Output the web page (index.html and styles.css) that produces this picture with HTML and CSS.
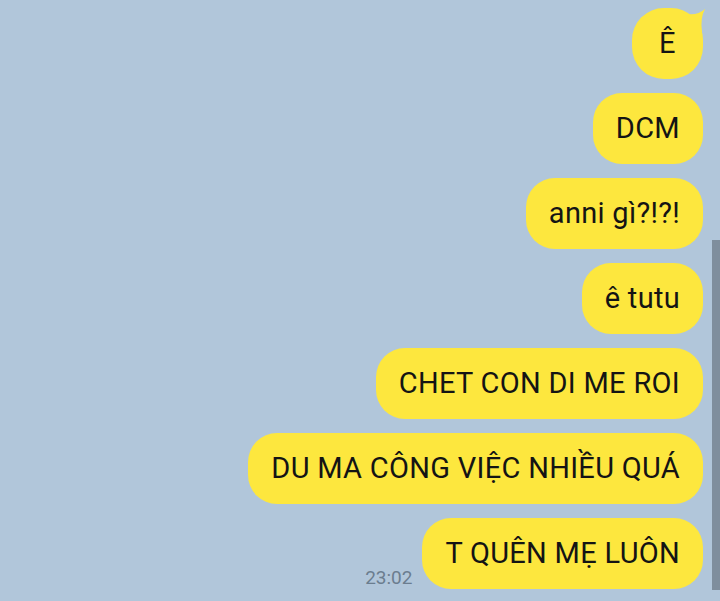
FILE: index.html
```html
<!DOCTYPE html>
<html>
<head>
<meta charset="utf-8">
<link rel="stylesheet" href="styles.css">
</head>
<body>
<div class="chat">
  <div class="row"><div class="bubble first">Ê<svg class="tail" viewBox="0 0 26 26" width="26" height="26"><path d="M2 5 Q15 9 24 1 Q19 10 21 24 L2 24 Z" fill="#fde73e"/></svg></div></div>
  <div class="row"><div class="bubble">DCM</div></div>
  <div class="row"><div class="bubble">anni gì?!?!</div></div>
  <div class="row"><div class="bubble">ê tutu</div></div>
  <div class="row"><div class="bubble">CHET CON DI ME ROI</div></div>
  <div class="row"><div class="bubble">DU MA CÔNG VIỆC NHIỀU QUÁ</div></div>
  <div class="row"><span class="time">23:02</span><div class="bubble">T QUÊN MẸ LUÔN</div></div>
</div>
<div class="scrollbar"></div>
</body>
</html>
```
FILE: styles.css
```css
html, body {
  margin: 0;
  height: 100%;
  background: #b1c6da;
  overflow: hidden;
}
.chat {
  display: flex;
  flex-direction: column;
  align-items: flex-end;
  gap: 14px;
  padding: 8px 17px 0 0;
  font-family: Roboto, "Noto Sans", sans-serif;
}
.row {
  display: flex;
  align-items: flex-end;
  gap: 10px;
}
.bubble {
  position: relative;
  background: #fde73e;
  color: #141414;
  font-size: 29px;
  letter-spacing: 0.3px;
  height: 71px;
  line-height: 71px;
  padding: 0 23px;
  border-radius: 29px;
  min-width: 25px;
  text-align: center;
  white-space: nowrap;
}
.first {
  border-radius: 32px;
}
.tail {
  position: absolute;
  right: -4px;
  top: 0;
  display: block;
}
.time {
  font-size: 19px;
  color: #6b7d8f;
  line-height: 19px;
  margin-bottom: 2px;
}
.scrollbar {
  position: absolute;
  left: 712px;
  top: 240px;
  width: 8px;
  height: 350px;
  background: #7f8e9d;
}
```
